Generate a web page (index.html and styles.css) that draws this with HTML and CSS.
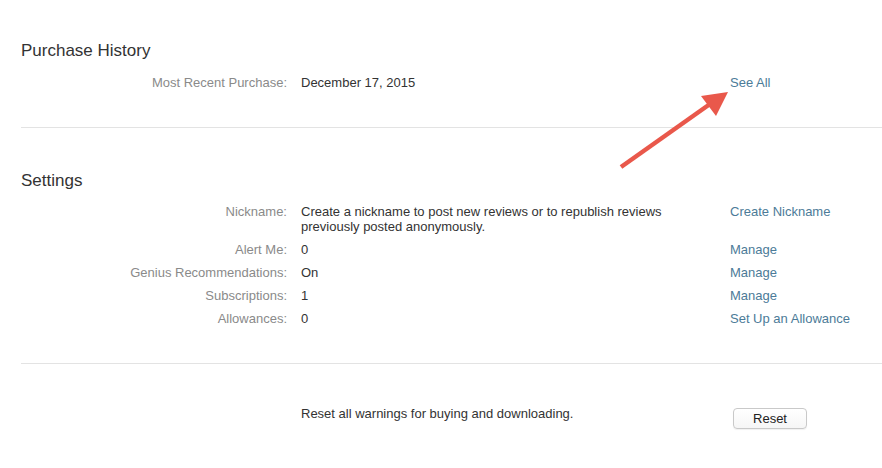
FILE: index.html
```
<!DOCTYPE html>
<html lang="en">
<head>
    <meta charset="UTF-8">
    <meta name="viewport" content="width=device-width, initial-scale=1.0">
    <title>Account Information</title>
    <link rel="stylesheet" href="styles.css">
</head>
<body>
    <!-- Purchase History -->
    <div class="section section-first">
        <h2>Purchase History</h2>
        <div class="rows">
            <div class="label">Most Recent Purchase:</div>
            <div class="value">December 17, 2015</div>
            <div class="action"><a href="#">See All</a></div>
        </div>
    </div>

    <!-- Settings -->
    <div class="section">
        <h2>Settings</h2>
        <div class="rows">
            <div class="label">Nickname:</div>
            <div class="value">Create a nickname to post new reviews or to republish reviews previously posted anonymously.</div>
            <div class="action"><a href="#">Create Nickname</a></div>

            <div class="label">Alert Me:</div>
            <div class="value">0</div>
            <div class="action"><a href="#">Manage</a></div>

            <div class="label">Genius Recommendations:</div>
            <div class="value">On</div>
            <div class="action"><a href="#">Manage</a></div>

            <div class="label">Subscriptions:</div>
            <div class="value">1</div>
            <div class="action"><a href="#">Manage</a></div>

            <div class="label">Allowances:</div>
            <div class="value">0</div>
            <div class="action"><a href="#">Set Up an Allowance</a></div>
        </div>
    </div>

    <!-- Reset warnings -->
    <div class="section section-last">
        <div class="rows">
            <div class="label"></div>
            <div class="value">Reset all warnings for buying and downloading.</div>
            <div class="action"><button type="button" class="reset-btn">Reset</button></div>
        </div>
    </div>

    <!-- Annotation arrow -->
    <svg class="arrow" width="882" height="468" viewBox="0 0 882 468">
        <line x1="621" y1="167" x2="710" y2="104" stroke="#e9584b" stroke-width="4.5"/>
        <polygon points="728,92 701,96 716,116" fill="#e9584b"/>
    </svg>
</body>
</html>
```

FILE: styles.css
```
/* General styles */
body {
    margin: 0;
    padding-left: 21px;
    font-family: "Liberation Sans", Arial, Helvetica, sans-serif;
    font-size: 13px;
    color: #333;
    background: #fff;
    position: relative;
    height: 468px;
    overflow: hidden;
}

.section {
    border-bottom: 1px solid #e3e3e3;
    padding-top: 43px;
    padding-bottom: 37px;
}

.section-first {
    padding-top: 41px;
}

.section-last {
    border-bottom: none;
    padding-top: 42px;
}

.section h2 {
    margin: 0;
    font-size: 17px;
    font-weight: normal;
    line-height: 20px;
    color: #333;
}

.rows {
    display: grid;
    grid-template-columns: 266px 415px auto;
    column-gap: 14px;
    row-gap: 8px;
    margin-top: 13px;
    line-height: 15px;
}

.section-first .rows {
    margin-top: 14px;
}

.section-last .rows {
    margin-top: 0;
}

.label {
    text-align: right;
    color: #8a8a8a;
}

.value {
    color: #333;
}

.action a {
    color: #4c7b98;
    text-decoration: none;
}

.reset-btn {
    margin: 2px 0 0 3px;
    width: 74px;
    height: 21px;
    padding: 0;
    font-family: inherit;
    font-size: 13px;
    color: #222;
    background: linear-gradient(#fff, #f6f6f6);
    border: 1px solid #c9c9c9;
    border-radius: 4px;
    box-shadow: 0 1px 1px rgba(0, 0, 0, 0.06);
}

/* Annotation overlay */
.arrow {
    position: absolute;
    left: 0;
    top: 0;
    pointer-events: none;
}
```
